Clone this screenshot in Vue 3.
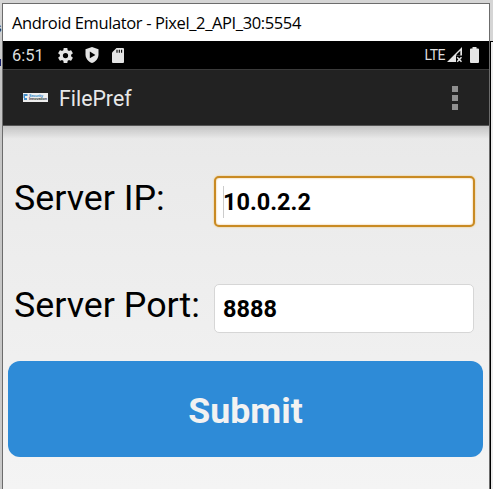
<script setup>
import { ref } from 'vue'
const ip = ref('10.0.2.2')
const port = ref('8888')
</script>

<template>
  <div class="desktop">
    <div class="edge left"><span class="glyph s">s</span><span class="glyph n"></span></div>
    <main class="window">
      <header class="titlebar"><span class="title">Android Emulator - Pixel_2_API_30:5554</span></header>
      <div class="status">
        <span class="clock">6:51</span>
        <svg class="gear" viewBox="2 2 20 20"><path fill="#e4e4e4" d="M19.43 12.98c.04-.32.07-.64.07-.98s-.03-.66-.07-.98l2.11-1.65c.19-.15.24-.42.12-.64l-2-3.46c-.12-.22-.39-.3-.61-.22l-2.49 1c-.52-.4-1.08-.73-1.69-.98l-.38-2.65C14.46 2.18 14.25 2 14 2h-4c-.25 0-.46.18-.49.42l-.38 2.65c-.61.25-1.17.59-1.69.98l-2.49-1c-.23-.09-.49 0-.61.22l-2 3.46c-.13.22-.07.49.12.64l2.11 1.65c-.04.32-.07.65-.07.98s.03.66.07.98l-2.11 1.65c-.19.15-.24.42-.12.64l2 3.46c.12.22.39.3.61.22l2.49-1c.52.4 1.08.73 1.69.98l.38 2.65c.03.24.24.42.49.42h4c.25 0 .46-.18.49-.42l.38-2.65c.61-.25 1.17-.59 1.69-.98l2.49 1c.23.09.49 0 .61-.22l2-3.46c.12-.22.07-.49-.12-.64zM12 15.5A3.5 3.5 0 1 1 12 8.500a3.500 3.500 0 0 1 0 7z"/></svg>
        <svg class="shield" viewBox="0 0 14 16"><path fill="#e4e4e4" d="M7 0 13.500 2.300V7.500C13.500 11.500 10.800 14.700 7 16 3.200 14.700.5 11.500.5 7.500V2.300z"/><path fill="#000" d="M4.800 4.500 10.400 7.900 4.800 11.300z"/></svg>
        <svg class="sd" viewBox="0 0 12 15"><path fill="#e4e4e4" d="M4.500 0H11a1 1 0 0 1 1 1V14a1 1 0 0 1-1 1H1a1 1 0 0 1-1-1V4.500z"/><path stroke="#000" stroke-width="1.100" d="M5 1.800V4.700M7.300 1.800V4.700M9.600 1.800V4.700"/></svg>
        <span class="lte">LTE</span>
        <svg class="signal" viewBox="0 0 16 16"><path fill="#e4e4e4" d="M0 15 15 0V8.500H9V15z"/><path fill="#000" d="M9.500 7.500 13.300 3.700V8.500H9.500z"/><path stroke="#e4e4e4" stroke-width="1.500" d="M10.200 10.300 14.500 14.700M14.500 10.300 10.200 14.700"/></svg>
        <svg class="battery" viewBox="0 0 9 16"><path fill="#e4e4e4" d="M2.500 0H6.500V1.500H8a1 1 0 0 1 1 1V15a1 1 0 0 1-1 1H1a1 1 0 0 1-1-1V2.500a1 1 0 0 1 1-1H2.500z"/></svg>
      </div>
      <div class="actionbar">
        <svg class="logo" viewBox="0 0 25 9"><path fill="#eee" d="M0 0H25V9H0z"/><path fill="#458fca" d="M.5 1H4.500V3H2V5H4V7H1V5H.5z"/><text class="brand" x="6" y="4.100" textLength="14">Security</text><text class="brand dark" x="6" y="7.200" textLength="18">Innovation</text></svg>
        <h1>FilePref</h1>
        <div class="overflow"><i></i><i></i><i></i></div>
      </div>
      <form class="content" @submit.prevent>
        <div class="row"><label for="ip">Server IP:</label><div class="field focused"><span class="caret"></span><input id="ip" v-model="ip" /></div></div>
        <div class="row second"><label for="port">Server Port:</label><div class="field"><input id="port" v-model="port" /></div></div>
        <button>Submit</button>
      </form>
    </main>
    <div class="edge right"></div>
  </div>
</template>

<style>
body { overflow: hidden; }
</style>
<style scoped>
* { box-sizing: border-box; }
.desktop { width: 493px; height: 489px; display: grid; grid-template-columns: 2px 488px 3px; background: #d5d5d5; font-family: Roboto, sans-serif; overflow: hidden; }
.edge { overflow: hidden; }
.left { background: linear-gradient(#d8d8d8, #c5c5c5 15%, #c9c9c9); display: flex; flex-direction: column; }
.glyph { font: 13px/15px "Liberation Sans", sans-serif; }
.s { margin: 20px 0 0 -5px; color: #222; }
.n { margin-top: 24px; width: 1px; height: 7px; background: #17206d; }
.right { margin-top: 41px; border-left: 1px solid #000; border-top: 1px solid #000; background: #ededed; }
.window { margin-top: 3px; height: 486px; border: 1px solid #6c6c6c; border-bottom: 0; }
.titlebar { height: 37px; background: #fff; padding-left: 9px; display: flex; align-items: center; }
.title { font: 16.500px/24px "Open Sans", sans-serif; letter-spacing: -0.380px; color: #000; white-space: nowrap; }
.status { height: 28px; background: #000; color: #dedede; display: flex; align-items: center; padding: 0 9px; }
.clock { font-size: 16.500px; width: 46px; padding-top: 1px; }
.gear { width: 15px; height: 15px; }
.shield { width: 14px; height: 16px; margin-left: 12px; }
.sd { width: 12px; height: 15px; margin-left: 13px; }
.lte { font-size: 14px; letter-spacing: -0.500px; margin-left: auto; }
.signal { width: 16px; height: 16px; margin-left: 2px; }
.battery { width: 9px; height: 16px; margin-left: 7px; margin-right: 1px; }
.actionbar { height: 57px; background: #222; border-top: 1px solid #3a3a3a; border-bottom: 1px solid #555; display: flex; align-items: center; padding: 0 31px 0 20px; }
.logo { width: 25px; height: 9px; }
.brand { font: 700 3.800px "Liberation Sans", sans-serif; fill: #2f86c8; }
.dark { fill: #333; }
h1 { margin: 2px 0 0 11px; font-size: 21.300px; font-weight: 400; color: #e8e8e8; }
.overflow { margin-left: auto; display: grid; gap: 3px; }
.overflow i { width: 6px; height: 6px; background: #909090; }
.content { height: 363px; background: linear-gradient(rgba(0, 0, 0, .16), transparent 13px), linear-gradient(#e9e9e9, #f4f4f4); padding: 50px 6px 0 5px; }
.row { display: grid; grid-template-columns: 205px 261px; height: 52px; padding-left: 1px; }
label { padding-left: 5px; font-size: 35.800px; line-height: 44px; color: #000; white-space: nowrap; }
.field { height: 51px; background: #fff; border: 1px solid #d6d6d6; border-radius: 5px; display: flex; align-items: center; padding-left: 8px; }
.focused { border: 2px solid #c98a23; box-shadow: inset 0 0 2px #e9b66d, 0 0 2px #eebd5e; padding-left: 7px; }
.caret { width: 1px; height: 32px; margin-right: -1px; background: #ccc; }
input { width: 230px; border: 0; padding: 1px 0 0; outline: 0; background: transparent; font: 700 23.500px/28px Roboto, sans-serif; color: #000; }
.second { margin-top: 55px; }
.second .field { height: 49px; width: 260px; margin: 1px 0 0; }
button { width: 475px; height: 96px; margin: 26px 0 0; padding: 4px 0 0; border: 0; border-radius: 12px; background: #2e8bd7; color: #f2f2f2; font: 700 35.700px/42px Roboto, sans-serif; display: block; }
</style>
